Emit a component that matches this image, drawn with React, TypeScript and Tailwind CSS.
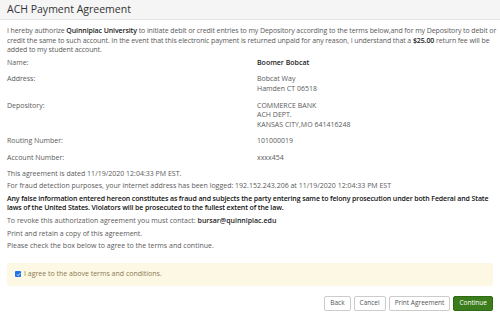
export default function App() {
  const rows: { label: string; value: string[]; bold?: boolean }[] = [
    { label: 'Name:', value: ['Boomer Bobcat'], bold: true },
    { label: 'Address:', value: ['Bobcat Way', 'Hamden CT 06518'] },
    { label: 'Depository:', value: ['COMMERCE BANK', 'ACH DEPT.', 'KANSAS CITY,MO 641416248'] },
    { label: 'Routing Number:', value: ['101000019'] },
    { label: 'Account Number:', value: ['xxxx454'] },
  ];

  return (
    <div className="w-[500px] h-[312px] overflow-hidden bg-white font-['Open_Sans',sans-serif] text-[#5a5a5a]">
      <div className="h-[20px] bg-[#f5f5f5] border-b border-[#e3e3e3] px-[7px] flex items-center">
        <h1 className="text-[10.5px] text-[#333] leading-none">ACH Payment Agreement</h1>
      </div>

      <div className="px-[7px] pt-[6px] text-[7px] leading-[9.6px]">
        <p className="mb-[3px] whitespace-nowrap tracking-[-0.1px]">
          I hereby authorize <b className="font-semibold text-[#222]">Quinnipiac University</b> to initiate debit or credit
          entries to my Depository according to the terms below,and for my Depository to debit or
          <br />
          credit the same to such account. In the event that this electronic payment is returned unpaid for any reason, I
          understand that a <b className="font-semibold text-[#222]">$25.00</b> return fee will be
          <br />
          added to my student account.
        </p>

        <div className="flex flex-col gap-[7px]">
          {rows.map((r) => (
            <div key={r.label} className="grid grid-cols-[250px_1fr]">
              <div>{r.label}</div>
              <div className={r.bold ? 'font-semibold text-[#222]' : ''}>
                {r.value.map((v) => (
                  <div key={v}>{v}</div>
                ))}
              </div>
            </div>
          ))}
        </div>

        <div className="mt-[6px] flex flex-col gap-[3px]">
          <p>This agreement is dated 11/19/2020 12:04:33 PM EST.</p>
          <p>For fraud detection purposes, your internet address has been logged: 192.152.243.206 at 11/19/2020 12:04:33 PM EST</p>
          <p className="font-semibold text-[#111] whitespace-nowrap tracking-[-0.12px]">
            Any false information entered hereon constitutes as fraud and subjects the party entering same to felony
            prosecution under both Federal and State
            <br />
            laws of the United States. Violators will be prosecuted to the fullest extent of the law.
          </p>
          <p>
            To revoke this authorization agreement you must contact:{' '}
            <b className="font-semibold text-[#222]">bursar@quinnipiac.edu</b>
          </p>
          <p>Print and retain a copy of this agreement.</p>
          <p>Please check the box below to agree to the terms and continue.</p>
        </div>

        <div className="mt-[12px] h-[23px] rounded-[2px] bg-[#fcf8e3] flex items-center px-[8px] gap-[3px] text-[#8a7a55]">
          <span className="w-[6px] h-[6px] rounded-[1px] bg-[#1a73e8] flex items-center justify-center">
            <svg viewBox="0 0 10 10" className="w-[5px] h-[5px]">
              <path d="M2 5.2 L4.2 7.4 L8.2 2.8" fill="none" stroke="white" strokeWidth="1.8" />
            </svg>
          </span>
          <span>I agree to the above terms and conditions.</span>
        </div>

        <div className="mt-[10px] flex justify-end gap-[3px] text-[6.5px]">
          <button className="h-[15px] px-[5px] border border-[#ccc] rounded-[2px] bg-white text-[#555]">Back</button>
          <button className="h-[15px] px-[5px] border border-[#ccc] rounded-[2px] bg-white text-[#555]">Cancel</button>
          <button className="h-[15px] px-[5px] border border-[#ccc] rounded-[2px] bg-white text-[#555]">Print Agreement</button>
          <button className="h-[15px] px-[5px] border border-[#2f6b14] rounded-[2px] bg-[#3b7d1c] text-white">Continue</button>
        </div>
      </div>
    </div>
  );
}
